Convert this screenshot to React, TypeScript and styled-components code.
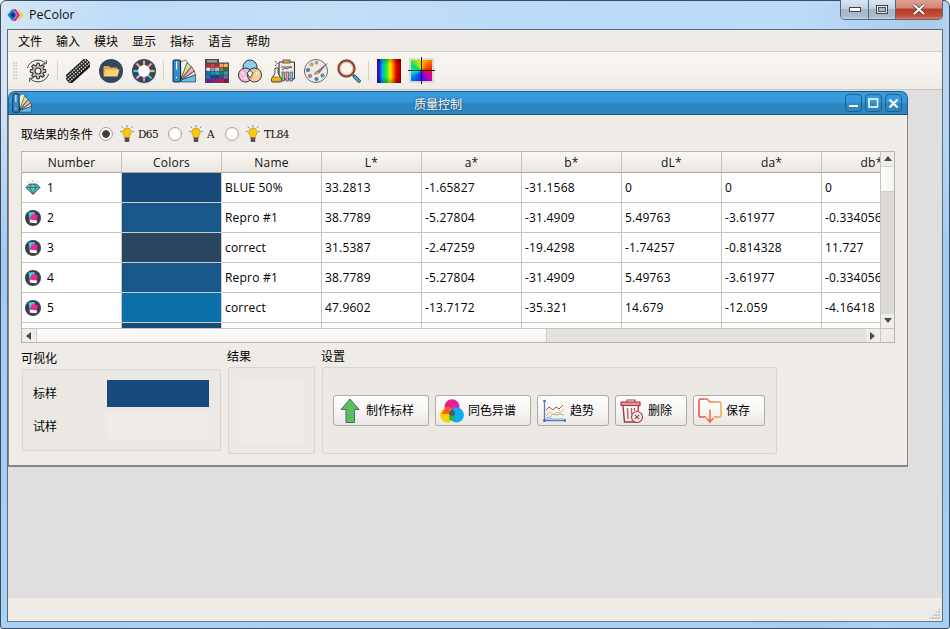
import React from "react";
import styled, { createGlobalStyle } from "styled-components";

const Global = createGlobalStyle`
  html, body { margin: 0; padding: 0; width: 950px; height: 629px; overflow: hidden; background: #fff; }
  #root { width: 950px; height: 629px; }
  * { box-sizing: border-box; }
`;

const LATIN = `"Open Sans", "Noto Sans CJK SC", sans-serif`;
const CJK = `"Noto Sans CJK SC", "Open Sans", sans-serif`;

const Frame = styled.div`
  width: 950px; height: 629px; display: flex; flex-direction: column;
  border: 1px solid #3f4c5c; border-radius: 6px 6px 3px 3px;
  padding: 0 6px 6px 6px;
  background:
    linear-gradient(180deg, rgba(150,195,240,0) 0, rgba(150,195,240,0) 15%, rgba(150,195,240,.75) 40%, rgba(160,205,245,.75) 100%),
    linear-gradient(100deg, #d4e6f6 0%, #bddcf9 12%, #c3def7 30%, #b9daf9 55%, #bcdcfa 75%, #a9cbe9 88%, #c4e0fb 93%, #b5d6f6 100%);
  font-family: ${CJK};
  color: #000;
`;
const TitleBar = styled.div`
  height: 28px; flex: none; display: flex; align-items: flex-start; position: relative;
`;
const AppTitle = styled.div`
  display: flex; align-items: center; gap: 5px; padding-top: 5px; flex: 1;
  font: 12.5px ${LATIN}; color: #111;
`;
const WinButtons = styled.div`
  display: flex; height: 20px; margin-top: -1px;
  border: 1px solid #5b6675; border-top: none; border-radius: 0 0 5px 5px; overflow: hidden;
`;
const WinButton = styled.div<{ $w: number; $red?: boolean }>`
  width: ${p => p.$w}px; display: flex; align-items: center; justify-content: center;
  border-right: 1px solid ${p => (p.$red ? "transparent" : "#5b6675")};
  background: ${p => p.$red
    ? "linear-gradient(180deg,#dfa193 0,#cf8675 40%,#b93c26 50%,#c5503a 85%,#d97b66 100%)"
    : "linear-gradient(180deg,#d9e6f2 0,#c3d3e2 45%,#a4b6c8 50%,#a9bccf 85%,#c4d5e4 100%)"};
  &:last-child { border-right: none; }
`;

const Client = styled.div`
  flex: 1; display: flex; flex-direction: column; min-height: 0;
  border: 1px solid #5d6b7a; border-bottom-color: #6b7886; background: #efebe6;
`;
const MenuBar = styled.div`
  height: 22px; flex: none; display: flex; align-items: center; gap: 14px; padding-left: 10px;
  background: #efebe6; border-bottom: 1px solid #d3cfca; font-size: 12px;
`;
const Toolbar = styled.div`
  height: 38px; flex: none; display: flex; align-items: center; padding-left: 5px;
  background: linear-gradient(180deg, #f8f5f0 0, #f6f3ee 50%, #efece7 100%);
  border-bottom: 1px solid #c9c5c0;
`;
const Handle = styled.div`
  width: 5px; height: 18px; margin-right: 3px; flex: none;
  background-image: radial-gradient(circle at 1px 1px, #cfccc7 .7px, transparent 1px);
  background-size: 2.5px 3px;
`;
const ToolIcon = styled.div`
  width: 33px; height: 26px; flex: none; display: flex; align-items: center; justify-content: center;
`;
const ToolSep = styled.div`
  width: 7px; height: 24px; flex: none; position: relative;
  &::after { content: ""; position: absolute; left: 3px; top: 2px; width: 1px; height: 20px; background: #d5d1cc; }
`;
const Spectrum = styled.div`
  width: 24px; height: 24px;
  background:
    linear-gradient(180deg, rgba(0,0,0,.25) 0, rgba(0,0,0,0) 25%, rgba(0,0,0,0) 75%, rgba(0,0,0,.3) 100%),
    linear-gradient(90deg, #3a0a8c 0, #2020e0 10%, #00b0f0 22%, #00e070 34%, #60f000 44%, #f8f000 55%, #ff8000 67%, #f00000 80%, #800000 100%);
`;
const Quad = styled.div`
  width: 21px; height: 21px; position: relative; outline: 2px solid #dcd8d3;
  background: conic-gradient(from 0deg, #ffc000 0, #ff7000 45deg, #f01010 90deg, #c000c0 135deg, #3010f0 180deg, #0070f0 225deg, #00e0e0 260deg, #00e060 300deg, #a0f000 335deg, #ffc000 360deg);
  &::before { content: ""; position: absolute; left: -3px; right: -3px; top: 10px; height: 1px; background: #222; }
  &::after { content: ""; position: absolute; top: -3px; bottom: -3px; left: 10px; width: 1px; background: #222; }
`;

const Mdi = styled.div`
  flex: 1; min-height: 0; background: #dfdfdf; padding: 1px 0 0 0; display: flex; align-items: flex-start;
`;
const SubWindow = styled.div`
  width: 900px; height: 376px; display: flex; flex-direction: column;
  border-radius: 7px 7px 0 0; background: #efebe6;
`;
const SubTitle = styled.div`
  height: 24px; flex: none; display: flex; align-items: center; padding: 0 5px 0 3px;
  border: 1px solid #1f5f8b; border-bottom: 1px solid #1a5276; border-radius: 7px 7px 0 0;
  background: linear-gradient(180deg, #379cdf 0, #3498db 45%, #2e86c1 55%, #2e86c1 100%);
`;
const SubName = styled.div`
  flex: 1; text-align: center; font-size: 12px; color: #fff; text-shadow: 0 0 2px #123; padding-right: 1px;
`;
const SubBtns = styled.div`display: flex; gap: 3px;`;
const SubBtn = styled.div`
  width: 17px; height: 18px; border: 1px solid #1f5f8b; border-radius: 4px;
  display: flex; align-items: center; justify-content: center;
`;
const SubBody = styled.div`
  flex: 1; min-height: 0; display: flex; flex-direction: column; padding: 0 12px;
  border: 1px solid #858585; border-top: none; border-bottom: 2px solid #858585;
`;
const CondRow = styled.div`
  height: 36px; flex: none; display: flex; align-items: center; padding-top: 1px; font-size: 12px;
`;
const CondLabel = styled.span`margin-right: 6px;`;
const Radio = styled.span<{ $on?: boolean }>`
  width: 14px; height: 14px; border-radius: 50%; flex: none; border: 1px solid #a9a6a2;
  background: ${p => p.$on
    ? "radial-gradient(circle, #3f3f3f 0, #3f3f3f 3.5px, #fff 4px)"
    : "#fff"};
  box-shadow: inset 0 0 1px #ccc;
  margin-right: 7px;
`;
const Lamp = styled.span<{ $w?: number }>`
  font: 400 10.5px "DejaVu Serif", "Liberation Serif", serif; letter-spacing: -.6px; padding-left: 4px; color: #111;
  ${p => (p.$w ? `width: ${p.$w}px;` : "")}
`;

const TableFrame = styled.div`
  width: 874px; height: 192px; flex: none; border: 1px solid #b7b4af; display: grid;
  grid-template-columns: 858px 14px; grid-template-rows: 176px 14px; background: #fff;
  font: 12px ${LATIN}; letter-spacing: .2px;
`;
const Viewport = styled.div`overflow: hidden; background: #fff;`;
const Row = styled.div`display: flex; width: 1000px;`;
const Head = styled.div`
  width: 100px; height: 21px; flex: none; text-align: center; line-height: 21px;
  border-right: 1px solid #c8c5c0; border-bottom: 1px solid #a9a6a2; color: #111;
  background: linear-gradient(180deg, #f9f7f3 0, #f3f0ec 50%, #e9e6e1 100%);
`;
const Cell = styled.div`
  width: 100px; height: 30px; flex: none; display: flex; align-items: center; padding: 0 0 0 3px; gap: 6px;
  border-right: 1px solid #c8c5c0; border-bottom: 1px solid #c8c5c0; white-space: nowrap; overflow: hidden;
  line-height: 29px;
`;
const Swatch = styled(Cell)<{ $c: string }>`
  background: ${p => p.$c}; padding: 0; border-right-color: #d0cdc8; border-bottom-color: #d0cdc8;
`;
const VScroll = styled.div`
  display: flex; flex-direction: column; background: #dcdad5; border-left: 1px solid #c8c5c0;
`;
const ArrowBtn = styled.div<{ $h?: boolean }>`
  ${p => (p.$h ? "width: 14px;" : "height: 14px;")}
  flex: none; display: flex; align-items: center; justify-content: center;
  background: #efedea;
`;
const VThumb = styled.div`
  height: 26px; flex: none; background: linear-gradient(90deg, #fdfdfc, #f4f2ef); border-top: 1px solid #d8d6d1; border-bottom: 1px solid #d0cec9;
`;
const Spacer = styled.div`flex: 1;`;
const HScroll = styled.div`
  display: flex; background: #e3e2de; border-top: 1px solid #c8c5c0;
`;
const HThumb = styled.div`
  width: 511px; flex: none; background: linear-gradient(180deg, #fdfdfc, #f4f2ef); border-left: 1px solid #d0cec9; border-right: 1px solid #d0cec9;
`;
const Corner = styled.div`background: #efebe6; border-left: 1px solid #c8c5c0; border-top: 1px solid #c8c5c0;`;

const Bottom = styled.div`
  display: flex; gap: 6px; padding-top: 6px; font-size: 12px;
`;
const Group = styled.div<{ $w: number; $top?: number }>`
  width: ${p => p.$w}px; flex: none; margin-top: ${p => p.$top ?? 0}px;
`;
const GroupLabel = styled.div`height: 16px; line-height: 14px; margin-bottom: 2px;`;
const GroupBox = styled.div<{ $h: number }>`
  margin-left: 1px; height: ${p => p.$h}px; border: 1px solid #d9d6d1; border-radius: 2px; background: #ece9e5;
`;
const VisGrid = styled.div`
  display: grid; grid-template-columns: 74px 102px; grid-template-rows: 27px 26px; row-gap: 6px;
  padding: 10px 0 0 10px; align-items: center;
`;
const VisLabel = styled.span`padding-bottom: 2px;`;
const ColorBar = styled.div<{ $c: string }>`height: 100%; background: ${p => p.$c};`;
const ResultWrap = styled(GroupBox)`padding: 10px;`;
const ResultInner = styled.div`width: 64px; height: 64px; background: #efebe6;`;
const ButtonRow = styled(GroupBox)`display: flex; align-items: center; gap: 6px; padding: 0 0 0 10px;`;
const ActionBtn = styled.div<{ $w: number }>`
  width: ${p => p.$w}px; height: 31px; display: flex; align-items: center; gap: 4px; padding-left: 4px;
  border: 1px solid #aeaba7; border-radius: 3px;
  background: linear-gradient(180deg, #ffffff 0, #f7f6f4 50%, #e9e7e4 100%);
`;
const ActionText = styled.span`padding-bottom: 2px;`;
const Status = styled.div`
  height: 23px; flex: none; background: #efebe6; position: relative;
`;
const Grip = styled.div`
  position: absolute; right: 2px; bottom: 2px; width: 11px; height: 11px;
  background-image: radial-gradient(circle at 1px 1px, #c4c1bc 1px, transparent 1px);
  background-size: 3px 3px;
  clip-path: polygon(100% 0, 100% 100%, 0 100%);
`;

/* ---------- icons ---------- */
const AppLogo = () => (
  <svg width="17" height="14" viewBox="0 0 17 14">
    <path d="M5.500 1 L0.500 7 L5.500 13 L10 7Z" fill="#1b75d0" />
    <path d="M8.500 1 L13 7 L8.500 13 L6 13 L10.500 7 L6 1Z" fill="#e8168a" />
    <path d="M11.500 1.500 L16.500 7 L11.500 12.500 L10 12.500 L14 7 L10 1.500Z" fill="#f2d21a" />
    <path d="M3.500 7 L6 4.500 L8 7 L6 9.500Z" fill="#1d2a4a" />
  </svg>
);
const gearPath = (() => {
  const pts: string[] = [];
  const teeth = 8;
  for (let i = 0; i < teeth; i++) {
    const a = (i / teeth) * Math.PI * 2;
    const w = Math.PI / teeth;
    const seq: [number, number][] = [[a - w * .75, 5.6], [a - w * .4, 7.8], [a + w * .4, 7.8], [a + w * .75, 5.6]];
    seq.forEach(([t, r]) => pts.push(`${(12 + r * Math.cos(t)).toFixed(2)},${(12 + r * Math.sin(t)).toFixed(2)}`));
  }
  return pts.join(" ");
})();
const GearIcon = () => (
  <svg width="24" height="24" viewBox="0 0 24 24" fill="none">
    <path d="M19.700 4.300A11 11 0 0 0 1.400 9M4.300 19.700A11 11 0 0 0 22.600 15" stroke="#444" strokeWidth="1" />
    <path d="M20.300 1.200v3.600h-3.600M3.700 22.800v-3.600h3.600" stroke="#444" strokeWidth="1" />
    <polygon points={gearPath} fill="#c6c3bf" stroke="#333" strokeWidth="1.100" strokeLinejoin="round" />
    <circle cx="12" cy="12" r="3" fill="#f3f0eb" stroke="#333" strokeWidth="1.100" />
  </svg>
);
const KeyboardIcon = () => {
  const keys: React.ReactElement[] = [];
  for (let r = 0; r < 3; r++) for (let c = 0; c < 11; c++)
    keys.push(<rect key={`${r}-${c}`} x={1 + c * 2.55} y={1.2 + r * 2.6} width="1.600" height="1.500" fill="#ddd" />);
  return (
    <svg width="24" height="24" viewBox="0 0 24 24">
      <g transform="translate(12 12) rotate(-42) translate(-14.500 -5)">
        <rect width="29" height="10" rx="1.200" fill="#111" />
        {keys}
      </g>
    </svg>
  );
};
const FolderIcon = () => (
  <svg width="24" height="24" viewBox="0 0 24 24">
    <circle cx="12" cy="12" r="12" fill="#31485f" />
    <path d="M4.500 16.500V8q0-1 1-1h4.300l1.500 1.600h6.200q1 0 1 1V11H8z" fill="#e7a83f" />
    <path d="M4.500 17.500 6.500 10.500h14l-2 7z" fill="#fdd077" />
  </svg>
);
const SunIcon = () => (
  <svg width="24" height="24" viewBox="0 0 24 24">
    <circle cx="12" cy="12" r="12" fill="#31485f" />
    <g strokeWidth="2.200">
      <path d="M12 1.500V6" stroke="#f5a35c" />
      <path d="M19.500 4.500 16 8" stroke="#ef9c8d" />
      <path d="M22.500 12H18" stroke="#f2c14e" />
      <path d="M19.500 19.500 16 16" stroke="#47c6c0" />
      <path d="M12 22.500V18" stroke="#ef7d9d" />
      <path d="M4.500 19.500 8 16" stroke="#e6b1d1" />
      <path d="M1.500 12H6" stroke="#4ccfe0" />
      <path d="M4.500 4.500 8 8" stroke="#f4a28c" />
    </g>
    <circle cx="12" cy="12" r="6" fill="#fff" />
  </svg>
);
const FanIcon = ({ size = 24 }: { size?: number }) => (
  <svg width={size} height={size} viewBox="0 0 24 24" style={{ flex: "none" }}>
    <g stroke="#222" strokeWidth=".6" strokeLinejoin="round">
      <path d="M8.500 3 13.500 1 16 4 9 20z" fill="#f6f1e7" />
      <path d="M9 20 15 3.500 19.500 7.500z" fill="#c5e77f" />
      <path d="M9.500 20.500 19.500 7.500 22.300 12z" fill="#f5a9d4" />
      <path d="M10 21 22.300 12 23.500 16z" fill="#f4dcae" />
      <path d="M9 23V21L23.500 16V23z" fill="#5cc1ee" />
    </g>
    <rect x="1" y="1" width="7.500" height="22" rx="1" fill="#2f8ed6" stroke="#111" strokeWidth=".9" />
    <rect x="4" y="2.500" width="1.200" height="8" fill="#fff" />
    <circle cx="4.600" cy="18.500" r="1.300" fill="#fff" stroke="#111" strokeWidth=".5" />
  </svg>
);
const GridIcon = () => {
  const rows = [
    ["#c62828", "#e53935", "#c2185b", "#f9a825", "#fbc02d"],
    ["#e0e0e0", "#9a9a9a", "#bdbdbd", "#777", "#555"],
    ["#0277bd", "#0097c7", "#00acc1", "#00897b", "#26a69a"],
    ["#1976d2", "#0d47a1", "#283593", "#3949ab", "#5c6bc0"],
    ["#6a1b9a", "#7b1fa2", "#ad1457", "#c2185b", "#880e4f"],
  ];
  return (
    <svg width="24" height="24" viewBox="0 0 24 24">
      <path d="M0 0H14V3.500H24V24H0z" fill="#4a4a4a" />
      <rect x="2" y="1.200" width="10" height="2.200" fill="#9fa4a8" />
      {rows.map((r, i) => r.map((c, j) => (
        <rect key={`${i}${j}`} x={1.300 + j * 4.400} y={4.800 + i * 3.800} width="3.900" height="3.300" fill={c} />
      )))}
    </svg>
  );
};
const VennIcon = () => (
  <svg width="24" height="24" viewBox="0 0 24 24">
    <circle cx="12" cy="8" r="7" fill="#8fd0f2" stroke="#333" strokeWidth="1" />
    <circle cx="7.500" cy="16" r="7" fill="#f5b5d8" fillOpacity=".85" stroke="#333" strokeWidth="1" />
    <circle cx="16.500" cy="16" r="7" fill="#f7c98b" fillOpacity=".85" stroke="#333" strokeWidth="1" />
    <path d="M12 11.500 9 14l3 5 3-5z" fill="#fafafa" stroke="#333" strokeWidth=".8" />
    <path d="M4 13l2 2M6 19h3M19 13l-1 3" stroke="#fff" strokeWidth="1" />
  </svg>
);
const LabIcon = () => (
  <svg width="24" height="24" viewBox="0 0 24 24">
    <rect x="8" y="3" width="15.500" height="17" rx="1" fill="#f0ece4" stroke="#2f2f2f" strokeWidth="1.100" />
    <rect x="12" y="1" width="7" height="3" fill="#e7a83f" stroke="#2f2f2f" strokeWidth=".7" />
    <path d="M10 8h11M11 11l3-2 2 1 3-2 2 1" stroke="#555" strokeWidth="1" fill="none" />
    <rect x="11" y="13" width="2.400" height="9" fill="#8ecf8a" stroke="#333" strokeWidth=".6" />
    <rect x="15" y="13" width="2.400" height="9" fill="#f39ac0" stroke="#333" strokeWidth=".6" />
    <rect x="19" y="13" width="2.400" height="9" fill="#7fc9ee" stroke="#333" strokeWidth=".6" />
    <path d="M4 9h3v5l3.800 7q.4 2-1.600 2H1.800q-2 0-1.600-2L4 14z" fill="#fff" stroke="#2f2f2f" strokeWidth=".9" />
    <path d="M1 18h8.600l1 3q.2 1.400-1.200 1.400H1.600Q.2 22.400.4 21z" fill="#f2b705" stroke="#2f2f2f" strokeWidth=".5" />
    <path d="M4 2l1 1.500M6.500 4l-1 1.500M4 6l1 1" stroke="#2f2f2f" strokeWidth=".9" />
  </svg>
);
const PaletteIcon = () => (
  <svg width="24" height="24" viewBox="0 0 24 24">
    <path d="M12 .6C5.500.6.500 5.600.500 12S5.500 23.400 12 23.400c6 0 11.500-5 11.500-11 0-6.500-5-11.800-11.500-11.800z" fill="#eceae6" stroke="#5a5a5a" strokeWidth=".9" />
    <circle cx="7.500" cy="5.500" r="1.700" fill="#e8b547" stroke="#555" strokeWidth=".4" />
    <circle cx="12.500" cy="3.800" r="1.400" fill="#e98a8a" stroke="#555" strokeWidth=".4" />
    <circle cx="4" cy="11" r="1.800" fill="#4c7dbb" stroke="#555" strokeWidth=".4" />
    <circle cx="6" cy="17" r="1.800" fill="#d66fa4" stroke="#555" strokeWidth=".4" />
    <circle cx="12.500" cy="20" r="1.800" fill="#4c7dbb" stroke="#555" strokeWidth=".4" />
    <circle cx="18.500" cy="16.500" r="1.800" fill="#3aa89a" stroke="#555" strokeWidth=".4" />
    <path d="M23 4.500 13.500 12l1.800 1.800z" fill="#c25b96" stroke="#444" strokeWidth=".5" />
    <path d="M13.500 12q-2.500.5-3 3.300 3-.2 4.800-1.500z" fill="#e8b547" stroke="#444" strokeWidth=".5" />
  </svg>
);
const SearchIcon = () => (
  <svg width="24" height="24" viewBox="0 0 24 24" fill="none">
    <circle cx="9.500" cy="9.500" r="8" fill="#f7f4ef" stroke="#8b4a36" strokeWidth="2.400" />
    <circle cx="9.500" cy="9.500" r="6.300" stroke="#e9b49e" strokeWidth="1" />
    <path d="M16 16l1.500 1.500" stroke="#444" strokeWidth="1.800" />
    <path d="M17.500 17.500 22 22" stroke="#2f3f4a" strokeWidth="3.600" strokeLinecap="round" />
    <path d="M17.500 17.500 22 22" stroke="#3fb4d8" strokeWidth="2" strokeLinecap="round" />
  </svg>
);
const Bulb = () => (
  <svg width="14" height="17" viewBox="0 0 14 17" fill="none" style={{ flex: "none" }}>
    <path d="M7 0v2.200M1.700 1.500l1.400 1.600M12.300 1.500l-1.400 1.600M0 6.500h1.800M12.200 6.500H14" stroke="#8a8a8a" strokeWidth="1" />
    <path d="M7 3a4.300 4.300 0 0 0-2.700 7.600V13h5.400v-2.400A4.300 4.300 0 0 0 7 3z" fill="#f9c614" stroke="#9a7a10" strokeWidth=".5" />
    <rect x="4.700" y="12.500" width="4.600" height="4.500" rx="1" fill="#5a4a5c" />
  </svg>
);
const Diamond = () => (
  <svg width="16" height="16" viewBox="0 0 16 16" style={{ flex: "none" }}>
    <path d="M8 .5v1.500M3 1.500l1 1.200M13 1.500l-1 1.200" stroke="#777" strokeWidth=".8" />
    <path d="M4.500 4h7L15 7.500 8 14.500 1 7.500z" fill="#4fc3b4" stroke="#2f3f46" strokeWidth=".9" />
    <path d="M1.500 7.500h13M5 7.500 8 14M11 7.500 8 14M5 7.500 6.500 4M11 7.500 9.500 4" stroke="#2f3f46" strokeWidth=".5" fill="none" />
  </svg>
);
const SampleIcon = () => (
  <svg width="16" height="16" viewBox="0 0 16 16" style={{ flex: "none" }}>
    <circle cx="8" cy="8" r="8" fill="#3b3f46" />
    <path d="M3.500 2.500 9.500 2 10 8 4.500 9z" fill="#2fd6ea" />
    <path d="M7 4 12.500 5 12 10.500 4.500 9.500z" fill="#f5249a" />
    <path d="M4.500 9.500 12 10.500l-.3 2.800-6.700-.5z" fill="#f6f6f6" />
  </svg>
);
const ArrowUpIcon = () => (
  <svg width="24" height="26" viewBox="0 0 24 26">
    <path d="M12 1 21 11.500H16.500V24.500H8V11.500H3z" fill="#5ac05c" stroke="#4b6a78" strokeWidth="1" />
  </svg>
);
const MetaIcon = () => (
  <svg width="24" height="24" viewBox="0 0 24 24">
    <circle cx="12" cy="7.800" r="7.500" fill="#ef1a8f" />
    <circle cx="7.500" cy="16" r="7.500" fill="#fdd000" />
    <circle cx="16.500" cy="16" r="7.500" fill="#11aeee" />
    <path d="M12 6a7.500 7.500 0 0 1 7.300 3.200A7.500 7.500 0 0 0 14.500 9 7.500 7.500 0 0 0 12 14z" fill="#a347c8" />
    <path d="M5 9.500q3-1.500 6-.5L9 15H1.500z" fill="#f2601a" />
    <path d="M9 20.500a7.500 7.500 0 0 0 6 0l-1-6h-4z" fill="#22b84c" />
    <path d="M12 9.500 14.800 15h-5.600z" fill="#555" />
    <circle cx="12" cy="14" r="2.800" fill="#555" />
  </svg>
);
const TrendIcon = () => (
  <svg width="24" height="24" viewBox="0 0 24 24" fill="none">
    <path d="M2.500 2V21.500H23" stroke="#4f7fb5" strokeWidth="1.300" />
    <circle cx="2.500" cy="2" r="1.300" fill="#3f6fa8" /><circle cx="2.500" cy="21.500" r="1.500" fill="#3f6fa8" /><circle cx="23" cy="21.500" r="1.300" fill="#3f6fa8" />
    <path d="M4 11l3-3 4 3 3-3 3 2 4-4" stroke="#b8513a" strokeWidth="1" />
    <path d="M4 17l4-4 3 3 4-3 3 1 4-4" stroke="#f0c531" strokeWidth="1" />
    <path d="M4 19l4-1 3-3 4 1 3-1 4 1M4 20h18" stroke="#8fb4d6" strokeWidth="1" />
  </svg>
);
const TrashIcon = () => (
  <svg width="24" height="24" viewBox="0 0 24 24" fill="none">
    <path d="M7 3V1h8v2" stroke="#a03a44" strokeWidth="1.100" />
    <rect x="1" y="3" width="19" height="3.500" fill="#e39a96" stroke="#a03a44" strokeWidth="1.100" />
    <path d="M3 7 4.500 23H15" stroke="#a03a44" strokeWidth="1.400" />
    <path d="M18.500 7l-.5 6" stroke="#a03a44" strokeWidth="1.400" />
    <path d="M7.500 9l.5 11M11.500 9v6M14.500 9v3" stroke="#c25a62" strokeWidth="1.400" />
    <circle cx="17" cy="18" r="5.500" fill="#efebe6" stroke="#ae3f48" strokeWidth="1.200" />
    <path d="M14.800 15.800l4.400 4.400M19.200 15.800l-4.400 4.400" stroke="#ae3f48" strokeWidth="1.200" />
  </svg>
);
const SaveIcon = () => (
  <svg width="24" height="26" viewBox="0 0 24 26" fill="none">
    <defs>
      <linearGradient id="saveg" x1="0" x2="1" y1="0" y2="0">
        <stop offset="0" stopColor="#ea4a40" /><stop offset="1" stopColor="#f7a94c" />
      </linearGradient>
    </defs>
    <path d="M8 19H2.500Q1 19 1 17.500V2.500Q1 1 2.500 1H9l3 3h9.500Q23 4 23 5.500V17.500Q23 19 21.500 19H16" stroke="url(#saveg)" strokeWidth="1.500" />
    <path d="M12 11.500V23M8.500 20 12 24 15.500 20" stroke="#ee6f3e" strokeWidth="1.500" />
  </svg>
);
const Tri = ({ d, c = "#4a4a4a" }: { d: "up" | "down" | "left" | "right"; c?: string }) => {
  const pts = { up: "4,1 8,6 0,6", down: "0,1 8,1 4,6", left: "6,0 6,8 1,4", right: "1,0 1,8 6,4" }[d];
  return <svg width="8" height="8" viewBox="0 0 8 8"><polygon points={pts} fill={c} /></svg>;
};

type RowData = { n: string; gold?: boolean; color: string; name: string; vals: string[] };
const ROWS: RowData[] = [
  { n: "1", gold: true, color: "#17497a", name: "BLUE 50%", vals: ["33.2813", "-1.65827", "-31.1568", "0", "0", "0"] },
  { n: "2", color: "#17578a", name: "Repro #1", vals: ["38.7789", "-5.27804", "-31.4909", "5.49763", "-3.61977", "-0.334056"] },
  { n: "3", color: "#2a4560", name: "correct", vals: ["31.5387", "-2.47259", "-19.4298", "-1.74257", "-0.814328", "11.727"] },
  { n: "4", color: "#17578a", name: "Repro #1", vals: ["38.7789", "-5.27804", "-31.4909", "5.49763", "-3.61977", "-0.334056"] },
  { n: "5", color: "#0b70a9", name: "correct", vals: ["47.9602", "-13.7172", "-35.321", "14.679", "-12.059", "-4.16418"] },
  { n: "", color: "#17497a", name: "", vals: ["", "", "", "", "", ""] },
];
const HEADS = ["Number", "Colors", "Name", "L*", "a*", "b*", "dL*", "da*", "db*"];
const MENUS = ["文件", "输入", "模块", "显示", "指标", "语言", "帮助"];

export default function App() {
  return (
    <>
      <Global />
      <Frame>
        <TitleBar>
          <AppTitle><AppLogo /><span>PeColor</span></AppTitle>
          <WinButtons>
            <WinButton $w={28}><svg width="12" height="6"><rect x=".5" y=".5" width="11" height="4" fill="#fff" stroke="#444" /></svg></WinButton>
            <WinButton $w={27}><svg width="12" height="10"><rect x=".5" y=".5" width="11" height="8" fill="#dde6ee" stroke="#444" /><rect x="2.500" y="2.500" width="7" height="4" fill="#a9bccf" stroke="#555" /></svg></WinButton>
            <WinButton $w={46} $red><svg width="16" height="11" viewBox="0 0 16 11"><path d="M3 1l10 9M13 1L3 10" stroke="#444" strokeWidth="3.400" /><path d="M3 1l10 9M13 1L3 10" stroke="#fff" strokeWidth="2" /></svg></WinButton>
          </WinButtons>
        </TitleBar>
        <Client>
          <MenuBar>{MENUS.map(m => <span key={m}>{m}</span>)}</MenuBar>
          <Toolbar>
            <Handle />
            <ToolIcon><GearIcon /></ToolIcon>
            <ToolSep />
            <ToolIcon><KeyboardIcon /></ToolIcon>
            <ToolIcon><FolderIcon /></ToolIcon>
            <ToolIcon><SunIcon /></ToolIcon>
            <ToolSep />
            <ToolIcon><FanIcon /></ToolIcon>
            <ToolIcon><GridIcon /></ToolIcon>
            <ToolIcon><VennIcon /></ToolIcon>
            <ToolIcon><LabIcon /></ToolIcon>
            <ToolIcon><PaletteIcon /></ToolIcon>
            <ToolIcon><SearchIcon /></ToolIcon>
            <ToolSep />
            <ToolIcon><Spectrum /></ToolIcon>
            <ToolIcon><Quad /></ToolIcon>
          </Toolbar>
          <Mdi>
            <SubWindow>
              <SubTitle>
                <FanIcon size={20} />
                <SubName>质量控制</SubName>
                <SubBtns>
                  <SubBtn><svg width="10" height="10"><rect x="0" y="7" width="9" height="2" fill="#fff" /></svg></SubBtn>
                  <SubBtn><svg width="11" height="10"><rect x="1" y="1" width="8.500" height="8" fill="none" stroke="#fff" strokeWidth="1.500" /></svg></SubBtn>
                  <SubBtn><svg width="11" height="11"><path d="M1.500 1.500l8 8M9.500 1.500l-8 8" stroke="#fff" strokeWidth="2.200" /></svg></SubBtn>
                </SubBtns>
              </SubTitle>
              <SubBody>
                <CondRow>
                  <CondLabel>取结果的条件</CondLabel>
                  <Radio $on /><Bulb /><Lamp $w={34}>D65</Lamp>
                  <Radio /><Bulb /><Lamp $w={22}>A</Lamp>
                  <Radio /><Bulb /><Lamp>TL84</Lamp>
                </CondRow>
                <TableFrame>
                  <Viewport>
                    <Row>{HEADS.map(h => <Head key={h}>{h}</Head>)}</Row>
                    {ROWS.map((r, i) => (
                      <Row key={i}>
                        <Cell>
                          {r.n && (r.gold ? <Diamond /> : <SampleIcon />)}
                          {r.n && <span>{r.n}</span>}
                        </Cell>
                        <Swatch $c={r.color} />
                        <Cell>{r.name}</Cell>
                        {r.vals.map((v, j) => <Cell key={j}>{v}</Cell>)}
                      </Row>
                    ))}
                  </Viewport>
                  <VScroll>
                    <ArrowBtn><Tri d="up" /></ArrowBtn>
                    <VThumb />
                    <Spacer />
                    <ArrowBtn><Tri d="down" /></ArrowBtn>
                  </VScroll>
                  <HScroll>
                    <ArrowBtn $h><Tri d="left" /></ArrowBtn>
                    <HThumb />
                    <Spacer />
                    <ArrowBtn $h><Tri d="right" /></ArrowBtn>
                  </HScroll>
                  <Corner />
                </TableFrame>
                <Bottom>
                  <Group $w={200} $top={2}>
                    <GroupLabel>可视化</GroupLabel>
                    <GroupBox $h={82}>
                      <VisGrid>
                        <VisLabel>标样</VisLabel><ColorBar $c="#17497a" />
                        <VisLabel>试样</VisLabel><ColorBar $c="#f0ede8" />
                      </VisGrid>
                    </GroupBox>
                  </Group>
                  <Group $w={88}>
                    <GroupLabel>结果</GroupLabel>
                    <ResultWrap $h={87}><ResultInner /></ResultWrap>
                  </Group>
                  <Group $w={456}>
                    <GroupLabel>设置</GroupLabel>
                    <ButtonRow $h={87}>
                      <ActionBtn $w={96}><ArrowUpIcon /><ActionText>制作标样</ActionText></ActionBtn>
                      <ActionBtn $w={96}><MetaIcon /><ActionText>同色异谱</ActionText></ActionBtn>
                      <ActionBtn $w={72}><TrendIcon /><ActionText>趋势</ActionText></ActionBtn>
                      <ActionBtn $w={72}><TrashIcon /><ActionText>删除</ActionText></ActionBtn>
                      <ActionBtn $w={72}><SaveIcon /><ActionText>保存</ActionText></ActionBtn>
                    </ButtonRow>
                  </Group>
                </Bottom>
              </SubBody>
            </SubWindow>
          </Mdi>
          <Status><Grip /></Status>
        </Client>
      </Frame>
    </>
  );
}
